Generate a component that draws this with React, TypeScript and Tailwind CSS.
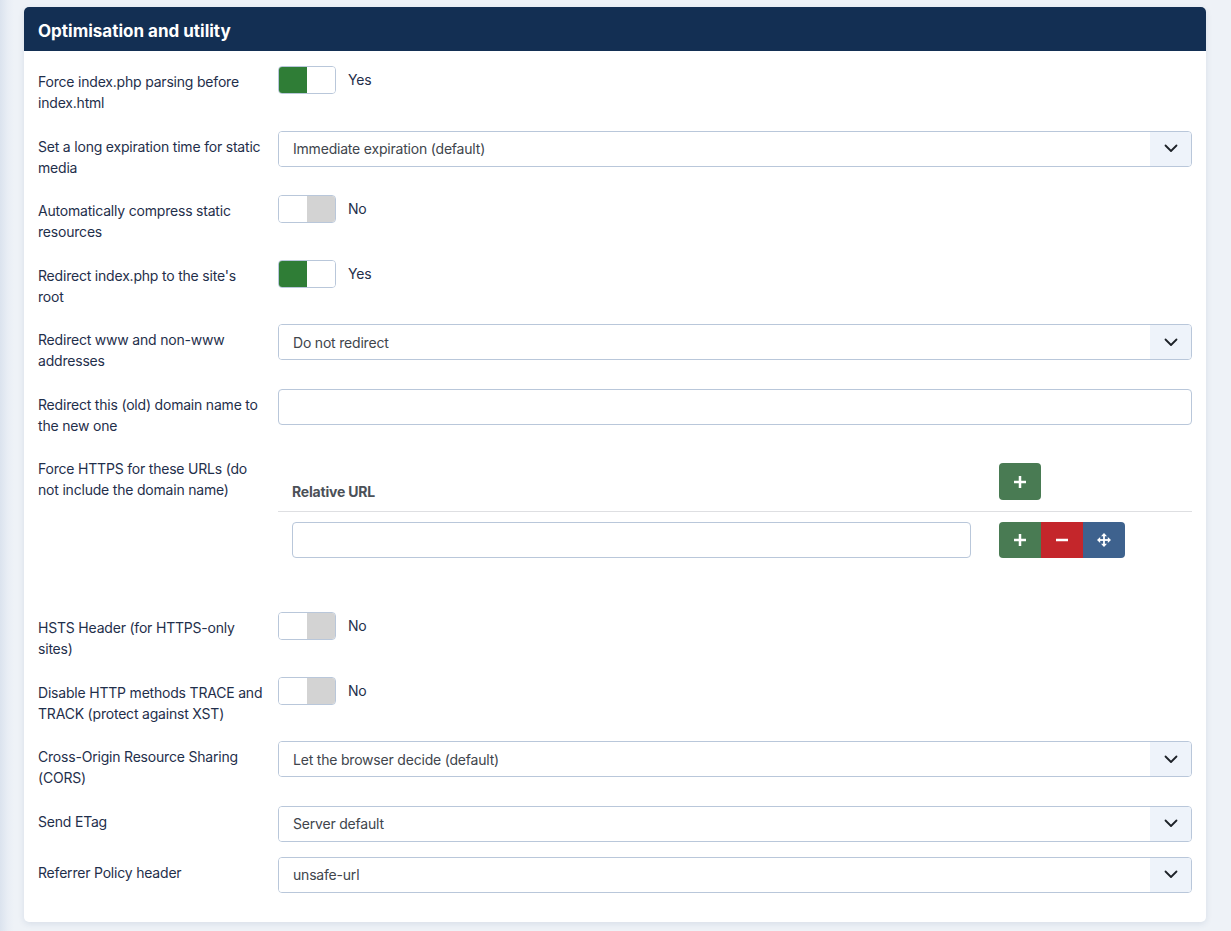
import React from "react";

type Row =
  | { kind: "toggle"; label: string; on: boolean }
  | { kind: "select"; label: string; value: string }
  | { kind: "input"; label: string }
  | { kind: "table"; label: string };

const ROWS: Row[] = [
  { kind: "toggle", label: "Force index.php parsing before index.html", on: true },
  { kind: "select", label: "Set a long expiration time for static media", value: "Immediate expiration (default)" },
  { kind: "toggle", label: "Automatically compress static resources", on: false },
  { kind: "toggle", label: "Redirect index.php to the site's root", on: true },
  { kind: "select", label: "Redirect www and non-www addresses", value: "Do not redirect" },
  { kind: "input", label: "Redirect this (old) domain name to the new one" },
  { kind: "table", label: "Force HTTPS for these URLs (do not include the domain name)" },
  { kind: "toggle", label: "HSTS Header (for HTTPS-only sites)", on: false },
  { kind: "toggle", label: "Disable HTTP methods TRACE and TRACK (protect against XST)", on: false },
  { kind: "select", label: "Cross-Origin Resource Sharing (CORS)", value: "Let the browser decide (default)" },
  { kind: "select", label: "Send ETag", value: "Server default" },
  { kind: "select", label: "Referrer Policy header", value: "unsafe-url" },
];

function Toggle({ on }: { on: boolean }) {
  return (
    <div className="flex items-center">
      <div className="flex h-[28px] w-[58px] overflow-hidden rounded-[4px] border border-[#b9c7da]">
        <div className={`flex-1 ${on ? "bg-[#2f7d36]" : "bg-white"}`} />
        <div className={`flex-1 ${on ? "bg-white" : "bg-[#d3d3d3]"}`} />
      </div>
      <span className="ml-[12px] -mt-[1px] text-[14px] text-[#1f2f4b]">{on ? "Yes" : "No"}</span>
    </div>
  );
}

function Chevron() {
  return (
    <svg width="14" height="9" viewBox="0 0 14 9" fill="none">
      <polyline points="1.5,1.5 7,7 12.5,1.5" stroke="#1d2228" strokeWidth="1.8" strokeLinecap="round" strokeLinejoin="round" />
    </svg>
  );
}

function Select({ value }: { value: string }) {
  return (
    <div className="flex h-[36px] w-full overflow-hidden rounded-[4px] border border-[#b9c7da]">
      <div className="flex flex-1 items-center bg-white pl-[14px] text-[14px] text-[#40454c]">{value}</div>
      <div className="flex w-[41px] items-center justify-center bg-[#eef3fa]">
        <Chevron />
      </div>
    </div>
  );
}

function PlusIcon() {
  return (
    <svg width="12" height="12" viewBox="0 0 12 12" fill="white">
      <rect x="4.75" y="0" width="2.5" height="12" />
      <rect x="0" y="4.75" width="12" height="2.5" />
    </svg>
  );
}

function MinusIcon() {
  return (
    <svg width="12" height="12" viewBox="0 0 12 12" fill="white">
      <rect x="0" y="4.75" width="12" height="2.5" />
    </svg>
  );
}

function MoveIcon() {
  return (
    <svg width="14" height="14" viewBox="0 0 14 14" fill="white">
      <rect x="6.1" y="2" width="1.8" height="10" />
      <rect x="2" y="6.1" width="10" height="1.8" />
      <polygon points="7,0 10,3.2 4,3.2" />
      <polygon points="7,14 10,10.8 4,10.8" />
      <polygon points="0,7 3.2,4 3.2,10" />
      <polygon points="14,7 10.8,4 10.8,10" />
    </svg>
  );
}

function UrlTable() {
  return (
    <div className="mb-[29px] w-full">
      <div className="flex border-b border-[#dedfe2]">
        <div className="flex flex-1 items-end px-[14px] pb-[9px] pt-[10px] text-[14px] font-bold text-[#4b5057]">
          Relative URL
        </div>
        <div className="w-[207px] px-[14px] pb-[11px] pt-[10px]">
          <button className="flex h-[37px] w-[42px] items-center justify-center rounded-[4px] bg-[#497b53]">
            <PlusIcon />
          </button>
        </div>
      </div>
      <div className="flex">
        <div className="flex-1 px-[14px] py-[10px]">
          <div className="h-[36px] w-full rounded-[4px] border border-[#b9c7da] bg-white" />
        </div>
        <div className="w-[207px] px-[14px] py-[10px]">
          <div className="flex h-[36px] w-[126px] overflow-hidden rounded-[4px]">
            <button className="flex flex-1 items-center justify-center bg-[#497b53]">
              <PlusIcon />
            </button>
            <button className="flex flex-1 items-center justify-center bg-[#c4262b]">
              <MinusIcon />
            </button>
            <button className="flex flex-1 items-center justify-center bg-[#3e628e]">
              <MoveIcon />
            </button>
          </div>
        </div>
      </div>
    </div>
  );
}

function Control({ row }: { row: Row }) {
  switch (row.kind) {
    case "toggle":
      return <Toggle on={row.on} />;
    case "select":
      return <Select value={row.value} />;
    case "input":
      return <div className="h-[36px] w-full rounded-[4px] border border-[#b9c7da] bg-white" />;
    case "table":
      return <UrlTable />;
  }
}

export default function App() {
  return (
    <div
      className="min-h-screen bg-[linear-gradient(to_right,#dbe3ee,#e9eef5_8px,#eef2f7_14px)] pb-[10px] pl-[24px] pr-[25px] pt-[7px] tracking-[-0.2px]"
      style={{ fontFamily: "Inter, 'Noto Sans', sans-serif" }}
    >
      <div className="overflow-hidden rounded-[5px] bg-white shadow-[0_2px_6px_rgba(30,60,110,0.10)]">
        <div className="flex h-[44px] items-center bg-[#132f53] px-[14px] pt-[5px] text-[17px] font-bold tracking-normal text-white">
          Optimisation and utility
        </div>
        <div className="px-[14px] pb-[14px] pt-[15px]">
          {ROWS.map((row) => (
            <div key={row.label} className="mb-[15px] flex">
              <div className="w-[240px] shrink-0 pb-[2.5px] pr-[15px] pt-[5px] text-[14px] leading-[21px] text-[#1f2f4b]">
                {row.label}
              </div>
              <div className="flex-1">
                <Control row={row} />
              </div>
            </div>
          ))}
        </div>
      </div>
    </div>
  );
}
